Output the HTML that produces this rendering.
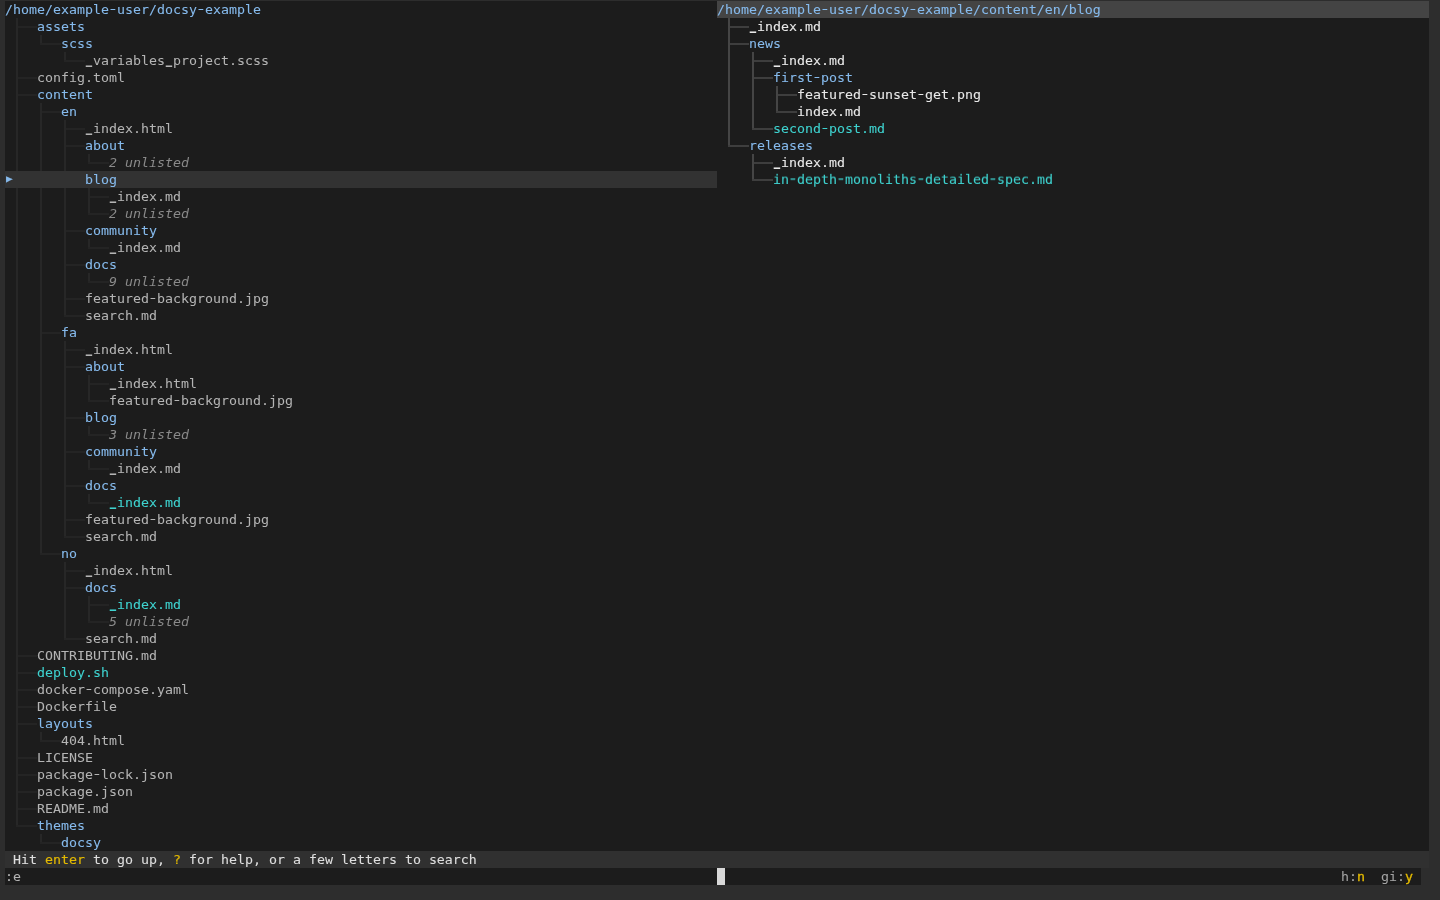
<!DOCTYPE html>
<html lang="en"><head><meta charset="utf-8"><title>broot</title>
<style>
html,body{margin:0;padding:0;background:#2d2d2d;}
body{width:1440px;height:900px;position:relative;overflow:hidden;font-family:"DejaVu Sans Mono", "Liberation Mono", monospace;font-size:13.29px;}
div,i,span{position:absolute;display:block;}
#scr{left:0;top:0;width:1440px;height:900px;}
#txt{left:0;top:0;width:1440px;height:900px;will-change:transform;}
.bg{background:#1c1c1c;}
.hdr{background:#444444;}
.sel{background:#323232;}
.status{background:#303030;}
.cursor{background:#d8d8d8;}
.ll{background:#272727;}
.llh{background:#242424;}
.lr{background:#454545;}
.lrh{background:#3e3e3e;}
.t{white-space:pre;height:17px;line-height:17px;margin-top:0px;font-style:normal;transform:scaleY(0.93);transform-origin:0 13px;-webkit-text-stroke:0.25px;}
.ld{color:#86baec;-webkit-text-stroke-width:0.08px;}
.lf{color:#b4b4b4;-webkit-text-stroke-width:0.04px;}
.lx{color:#3fd2cf;-webkit-text-stroke-width:0.08px;}
.lu{color:#8a8a8a;font-style:italic;-webkit-text-stroke-width:0;}
.rd{color:#86baec;-webkit-text-stroke-width:0.08px;}
.rf{color:#e8e8e8;-webkit-text-stroke-width:0.08px;}
.rx{color:#3fd2cf;-webkit-text-stroke-width:0.08px;}
.w{color:#dedede;-webkit-text-stroke-width:0.1px;}
.y{color:#e4ba00;-webkit-text-stroke-width:0.15px;}
.yb{color:#e4ba00;-webkit-text-stroke-width:0.3px;}
.inp{color:#b4b4b4;-webkit-text-stroke-width:0.05px;}
.fl{color:#a4a4a4;-webkit-text-stroke-width:0.05px;}
b{font-weight:normal;display:inline-block;transform:translateY(-3px) scale(0.8,3.2);transform-origin:50% 15px;-webkit-text-stroke-width:0;}
em{font-style:normal;display:inline-block;transform:translateY(-1px) scaleX(1.35);}
.mark{font-size:11px;margin-top:-1px;margin-left:0.9px;}
</style></head>
<body>
<div id="scr">
<div class="bg" style="left:5px;top:1px;width:1424px;height:867px"></div>
<div class="bg" style="left:5px;top:868px;width:1416px;height:17px"></div>
<div class="hdr" style="left:717px;top:1px;width:712px;height:17px"></div>
<div class="sel" style="left:5px;top:171px;width:712px;height:17px"></div>
<div class="status" style="left:5px;top:851px;width:1424px;height:17px"></div>
<div class="cursor" style="left:717px;top:868px;width:8px;height:17px"></div>
<i class="ll" style="left:16px;top:18px;width:2px;height:153px"></i>
<i class="ll" style="left:16px;top:188px;width:2px;height:639px"></i>
<i class="ll" style="left:40px;top:35px;width:2px;height:10px"></i>
<i class="ll" style="left:40px;top:103px;width:2px;height:68px"></i>
<i class="ll" style="left:40px;top:188px;width:2px;height:367px"></i>
<i class="ll" style="left:40px;top:732px;width:2px;height:10px"></i>
<i class="ll" style="left:40px;top:834px;width:2px;height:10px"></i>
<i class="ll" style="left:64px;top:52px;width:2px;height:10px"></i>
<i class="ll" style="left:64px;top:120px;width:2px;height:51px"></i>
<i class="ll" style="left:64px;top:188px;width:2px;height:129px"></i>
<i class="ll" style="left:64px;top:341px;width:2px;height:197px"></i>
<i class="ll" style="left:64px;top:562px;width:2px;height:78px"></i>
<i class="ll" style="left:88px;top:154px;width:2px;height:10px"></i>
<i class="ll" style="left:88px;top:188px;width:2px;height:27px"></i>
<i class="ll" style="left:88px;top:239px;width:2px;height:10px"></i>
<i class="ll" style="left:88px;top:273px;width:2px;height:10px"></i>
<i class="ll" style="left:88px;top:375px;width:2px;height:27px"></i>
<i class="ll" style="left:88px;top:426px;width:2px;height:10px"></i>
<i class="ll" style="left:88px;top:460px;width:2px;height:10px"></i>
<i class="ll" style="left:88px;top:494px;width:2px;height:10px"></i>
<i class="ll" style="left:88px;top:596px;width:2px;height:27px"></i>
<i class="llh" style="left:18px;top:26px;width:19px;height:2px"></i>
<i class="llh" style="left:40px;top:43px;width:21px;height:2px"></i>
<i class="llh" style="left:64px;top:60px;width:21px;height:2px"></i>
<i class="llh" style="left:18px;top:77px;width:19px;height:2px"></i>
<i class="llh" style="left:18px;top:94px;width:19px;height:2px"></i>
<i class="llh" style="left:42px;top:111px;width:19px;height:2px"></i>
<i class="llh" style="left:66px;top:128px;width:19px;height:2px"></i>
<i class="llh" style="left:66px;top:145px;width:19px;height:2px"></i>
<i class="llh" style="left:88px;top:162px;width:21px;height:2px"></i>
<i class="llh" style="left:90px;top:196px;width:19px;height:2px"></i>
<i class="llh" style="left:88px;top:213px;width:21px;height:2px"></i>
<i class="llh" style="left:66px;top:230px;width:19px;height:2px"></i>
<i class="llh" style="left:88px;top:247px;width:21px;height:2px"></i>
<i class="llh" style="left:66px;top:264px;width:19px;height:2px"></i>
<i class="llh" style="left:88px;top:281px;width:21px;height:2px"></i>
<i class="llh" style="left:66px;top:298px;width:19px;height:2px"></i>
<i class="llh" style="left:64px;top:315px;width:21px;height:2px"></i>
<i class="llh" style="left:42px;top:332px;width:19px;height:2px"></i>
<i class="llh" style="left:66px;top:349px;width:19px;height:2px"></i>
<i class="llh" style="left:66px;top:366px;width:19px;height:2px"></i>
<i class="llh" style="left:90px;top:383px;width:19px;height:2px"></i>
<i class="llh" style="left:88px;top:400px;width:21px;height:2px"></i>
<i class="llh" style="left:66px;top:417px;width:19px;height:2px"></i>
<i class="llh" style="left:88px;top:434px;width:21px;height:2px"></i>
<i class="llh" style="left:66px;top:451px;width:19px;height:2px"></i>
<i class="llh" style="left:88px;top:468px;width:21px;height:2px"></i>
<i class="llh" style="left:66px;top:485px;width:19px;height:2px"></i>
<i class="llh" style="left:88px;top:502px;width:21px;height:2px"></i>
<i class="llh" style="left:66px;top:519px;width:19px;height:2px"></i>
<i class="llh" style="left:64px;top:536px;width:21px;height:2px"></i>
<i class="llh" style="left:40px;top:553px;width:21px;height:2px"></i>
<i class="llh" style="left:66px;top:570px;width:19px;height:2px"></i>
<i class="llh" style="left:66px;top:587px;width:19px;height:2px"></i>
<i class="llh" style="left:90px;top:604px;width:19px;height:2px"></i>
<i class="llh" style="left:88px;top:621px;width:21px;height:2px"></i>
<i class="llh" style="left:64px;top:638px;width:21px;height:2px"></i>
<i class="llh" style="left:18px;top:655px;width:19px;height:2px"></i>
<i class="llh" style="left:18px;top:672px;width:19px;height:2px"></i>
<i class="llh" style="left:18px;top:689px;width:19px;height:2px"></i>
<i class="llh" style="left:18px;top:706px;width:19px;height:2px"></i>
<i class="llh" style="left:18px;top:723px;width:19px;height:2px"></i>
<i class="llh" style="left:40px;top:740px;width:21px;height:2px"></i>
<i class="llh" style="left:18px;top:757px;width:19px;height:2px"></i>
<i class="llh" style="left:18px;top:774px;width:19px;height:2px"></i>
<i class="llh" style="left:18px;top:791px;width:19px;height:2px"></i>
<i class="llh" style="left:18px;top:808px;width:19px;height:2px"></i>
<i class="llh" style="left:16px;top:825px;width:21px;height:2px"></i>
<i class="llh" style="left:40px;top:842px;width:21px;height:2px"></i>
<i class="lr" style="left:728px;top:18px;width:2px;height:129px"></i>
<i class="lr" style="left:752px;top:52px;width:2px;height:78px"></i>
<i class="lr" style="left:752px;top:154px;width:2px;height:27px"></i>
<i class="lr" style="left:776px;top:86px;width:2px;height:27px"></i>
<i class="lrh" style="left:730px;top:26px;width:19px;height:2px"></i>
<i class="lrh" style="left:730px;top:43px;width:19px;height:2px"></i>
<i class="lrh" style="left:754px;top:60px;width:19px;height:2px"></i>
<i class="lrh" style="left:754px;top:77px;width:19px;height:2px"></i>
<i class="lrh" style="left:778px;top:94px;width:19px;height:2px"></i>
<i class="lrh" style="left:776px;top:111px;width:21px;height:2px"></i>
<i class="lrh" style="left:752px;top:128px;width:21px;height:2px"></i>
<i class="lrh" style="left:728px;top:145px;width:21px;height:2px"></i>
<i class="lrh" style="left:754px;top:162px;width:19px;height:2px"></i>
<i class="lrh" style="left:752px;top:179px;width:21px;height:2px"></i>
</div>
<div id="txt">
<span class="t ld" style="left:5px;top:1px">/home/example<em>-</em>user/docsy<em>-</em>example</span>
<span class="t ld" style="left:37px;top:18px">assets</span>
<span class="t ld" style="left:61px;top:35px">scss</span>
<span class="t lf" style="left:85px;top:52px"><b>_</b>variables<b>_</b>project.scss</span>
<span class="t lf" style="left:37px;top:69px">config.toml</span>
<span class="t ld" style="left:37px;top:86px">content</span>
<span class="t ld" style="left:61px;top:103px">en</span>
<span class="t lf" style="left:85px;top:120px"><b>_</b>index.html</span>
<span class="t ld" style="left:85px;top:137px">about</span>
<span class="t lu" style="left:109px;top:154px">2 unlisted</span>
<span class="t ld" style="left:85px;top:171px">blog</span>
<span class="t lf" style="left:109px;top:188px"><b>_</b>index.md</span>
<span class="t lu" style="left:109px;top:205px">2 unlisted</span>
<span class="t ld" style="left:85px;top:222px">community</span>
<span class="t lf" style="left:109px;top:239px"><b>_</b>index.md</span>
<span class="t ld" style="left:85px;top:256px">docs</span>
<span class="t lu" style="left:109px;top:273px">9 unlisted</span>
<span class="t lf" style="left:85px;top:290px">featured<em>-</em>background.jpg</span>
<span class="t lf" style="left:85px;top:307px">search.md</span>
<span class="t ld" style="left:61px;top:324px">fa</span>
<span class="t lf" style="left:85px;top:341px"><b>_</b>index.html</span>
<span class="t ld" style="left:85px;top:358px">about</span>
<span class="t lf" style="left:109px;top:375px"><b>_</b>index.html</span>
<span class="t lf" style="left:109px;top:392px">featured<em>-</em>background.jpg</span>
<span class="t ld" style="left:85px;top:409px">blog</span>
<span class="t lu" style="left:109px;top:426px">3 unlisted</span>
<span class="t ld" style="left:85px;top:443px">community</span>
<span class="t lf" style="left:109px;top:460px"><b>_</b>index.md</span>
<span class="t ld" style="left:85px;top:477px">docs</span>
<span class="t lx" style="left:109px;top:494px"><b>_</b>index.md</span>
<span class="t lf" style="left:85px;top:511px">featured<em>-</em>background.jpg</span>
<span class="t lf" style="left:85px;top:528px">search.md</span>
<span class="t ld" style="left:61px;top:545px">no</span>
<span class="t lf" style="left:85px;top:562px"><b>_</b>index.html</span>
<span class="t ld" style="left:85px;top:579px">docs</span>
<span class="t lx" style="left:109px;top:596px"><b>_</b>index.md</span>
<span class="t lu" style="left:109px;top:613px">5 unlisted</span>
<span class="t lf" style="left:85px;top:630px">search.md</span>
<span class="t lf" style="left:37px;top:647px">CONTRIBUTING.md</span>
<span class="t lx" style="left:37px;top:664px">deploy.sh</span>
<span class="t lf" style="left:37px;top:681px">docker<em>-</em>compose.yaml</span>
<span class="t lf" style="left:37px;top:698px">Dockerfile</span>
<span class="t ld" style="left:37px;top:715px">layouts</span>
<span class="t lf" style="left:61px;top:732px">404.html</span>
<span class="t lf" style="left:37px;top:749px">LICENSE</span>
<span class="t lf" style="left:37px;top:766px">package<em>-</em>lock.json</span>
<span class="t lf" style="left:37px;top:783px">package.json</span>
<span class="t lf" style="left:37px;top:800px">README.md</span>
<span class="t ld" style="left:37px;top:817px">themes</span>
<span class="t ld" style="left:61px;top:834px">docsy</span>
<span class="t ld mark" style="left:5px;top:171px">▶</span>
<span class="t rd" style="left:717px;top:1px">/home/example<em>-</em>user/docsy<em>-</em>example/content/en/blog</span>
<span class="t rf" style="left:749px;top:18px"><b>_</b>index.md</span>
<span class="t rd" style="left:749px;top:35px">news</span>
<span class="t rf" style="left:773px;top:52px"><b>_</b>index.md</span>
<span class="t rd" style="left:773px;top:69px">first<em>-</em>post</span>
<span class="t rf" style="left:797px;top:86px">featured<em>-</em>sunset<em>-</em>get.png</span>
<span class="t rf" style="left:797px;top:103px">index.md</span>
<span class="t rx" style="left:773px;top:120px">second<em>-</em>post.md</span>
<span class="t rd" style="left:749px;top:137px">releases</span>
<span class="t rf" style="left:773px;top:154px"><b>_</b>index.md</span>
<span class="t rx" style="left:773px;top:171px">in<em>-</em>depth<em>-</em>monoliths<em>-</em>detailed<em>-</em>spec.md</span>
<span class="t w" style="left:13px;top:851px">Hit </span>
<span class="t y" style="left:45px;top:851px">enter</span>
<span class="t w" style="left:85px;top:851px"> to go up, </span>
<span class="t y" style="left:173px;top:851px">?</span>
<span class="t w" style="left:181px;top:851px"> for help, or a few letters to search</span>
<span class="t inp" style="left:5px;top:868px">:e</span>
<span class="t fl" style="left:1341px;top:868px">h:</span>
<span class="t yb" style="left:1357px;top:868px">n</span>
<span class="t fl" style="left:1381px;top:868px">gi:</span>
<span class="t yb" style="left:1405px;top:868px">y</span>
</div>
</body></html>
